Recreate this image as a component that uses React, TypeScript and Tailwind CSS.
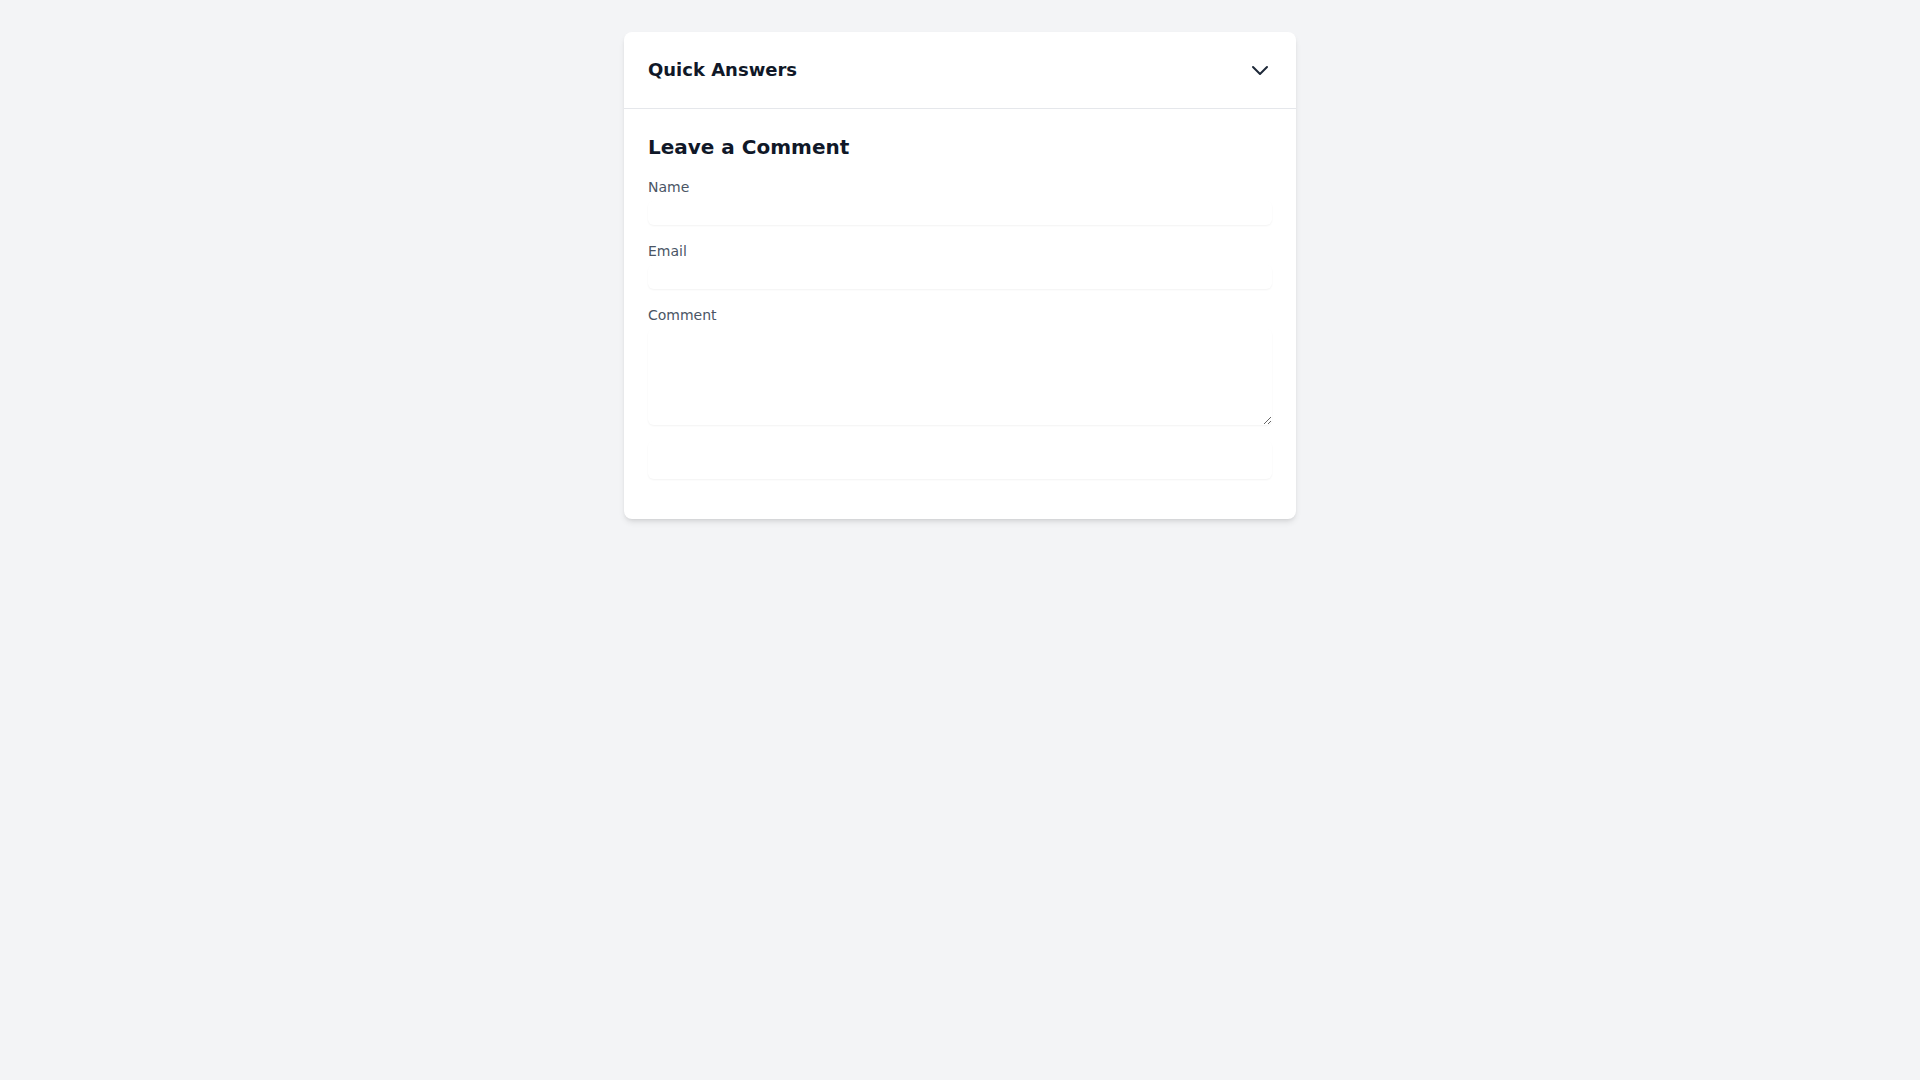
import { useState } from "react";

function ChevronDown() {
  return (
    <svg
      className="h-6 w-6 text-gray-800"
      fill="none"
      viewBox="0 0 24 24"
      stroke="currentColor"
      strokeWidth={2}
    >
      <path strokeLinecap="round" strokeLinejoin="round" d="M19 9l-7 7-7-7" />
    </svg>
  );
}

export default function App() {
  const [open, setOpen] = useState(true);
  const [name, setName] = useState("");
  const [email, setEmail] = useState("");
  const [comment, setComment] = useState("");

  return (
    <div
      className="min-h-screen bg-gray-100 pt-8"
      style={{ fontFamily: '"DejaVu Sans", sans-serif' }}
    >
      <div className="mx-auto max-w-2xl rounded-lg bg-white shadow-md">
        <button
          type="button"
          onClick={() => setOpen(!open)}
          className="flex w-full items-center justify-between border-b border-gray-200 px-6 py-6 text-left"
        >
          <span className="text-lg font-bold text-gray-900">Quick Answers</span>
          <ChevronDown />
        </button>

        {open ? (
          <div className="p-6">
            <h2 className="mb-4 text-xl font-bold text-gray-900">
              Leave a Comment
            </h2>
            <form onSubmit={(e) => e.preventDefault()}>
              <div className="mb-4">
                <label htmlFor="name" className="block text-sm text-gray-600">
                  Name
                </label>
                <input
                  id="name"
                  type="text"
                  value={name}
                  onChange={(e) => setName(e.target.value)}
                  className="mt-1 block w-full rounded-md shadow-xs outline-none"
                />
              </div>
              <div className="mb-4">
                <label htmlFor="email" className="block text-sm text-gray-600">
                  Email
                </label>
                <input
                  id="email"
                  type="email"
                  value={email}
                  onChange={(e) => setEmail(e.target.value)}
                  className="mt-1 block w-full rounded-md shadow-xs outline-none"
                />
              </div>
              <div className="mb-4">
                <label htmlFor="comment" className="block text-sm text-gray-600">
                  Comment
                </label>
                <textarea
                  id="comment"
                  rows={4}
                  value={comment}
                  onChange={(e) => setComment(e.target.value)}
                  className="mt-1 block w-full rounded-md shadow-xs outline-none"
                />
              </div>
              <div className="mb-4">
                <button
                  type="submit"
                  aria-label="Submit"
                  className="block h-[38px] w-full rounded-md border border-transparent shadow-xs"
                />
              </div>
            </form>
          </div>
        ) : null}
      </div>
    </div>
  );
}
